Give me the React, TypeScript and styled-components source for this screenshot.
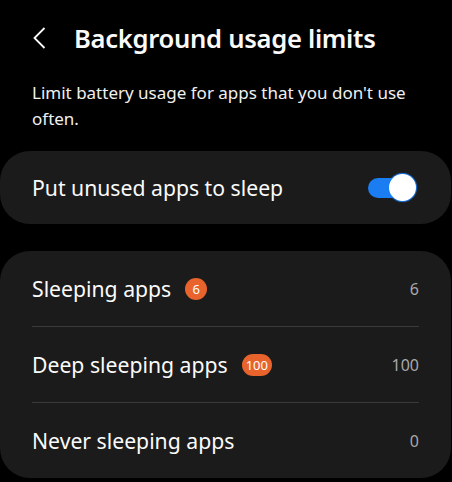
import styled, { createGlobalStyle } from "styled-components";

const GlobalStyle = createGlobalStyle`
  html, body {
    margin: 0;
    padding: 0;
    background: #000;
  }
  body {
    font-family: "Noto Sans", "Open Sans", sans-serif;
    color: #fafafa;
  }
`;

const Screen = styled.div`
  width: 452px;
  height: 482px;
  background: #000;
  overflow: hidden;
  display: flex;
  flex-direction: column;
`;

const Header = styled.div`
  height: 76px;
  display: flex;
  align-items: center;
  padding-left: 33px;
  gap: 23px;
`;

const BackButton = styled.div`
  width: 18px;
  height: 26px;
  display: flex;
  align-items: center;
`;

const Title = styled.h1`
  margin: 0;
  font-size: 25.6px;
  font-weight: 600;
  letter-spacing: -0.3px;
`;

const Description = styled.p`
  margin: 0;
  padding: 4px 32px 0;
  font-size: 17px;
  line-height: 26px;
  color: #f0f0f0;
`;

const Card = styled.div<{ $top: number }>`
  margin: ${(p) => p.$top}px 1px 0 0;
  background: #1b1b1b;
  border-radius: 30px;
  display: flex;
  flex-direction: column;
  padding: 0 32px;
`;

const SwitchRow = styled.div`
  height: 73px;
  display: flex;
  align-items: center;
  justify-content: space-between;
`;

const Row = styled.div<{ $last?: boolean }>`
  height: 75px;
  display: flex;
  align-items: center;
  justify-content: space-between;
  border-bottom: ${(p) => (p.$last ? "none" : "1px solid #3a3a3a")};
`;

const Label = styled.div`
  display: flex;
  align-items: center;
  gap: 14px;
  font-size: 21.2px;
`;

const Badge = styled.span`
  min-width: 22px;
  height: 22px;
  padding: 0 4px;
  box-sizing: border-box;
  border-radius: 11px;
  background: #e8642c;
  color: #fff;
  font-size: 13px;
  display: inline-flex;
  align-items: center;
  justify-content: center;
`;

const Value = styled.span`
  font-size: 16px;
  color: #a8a8a8;
`;

const Track = styled.div`
  position: relative;
  width: 39px;
  height: 20px;
  margin-right: 12px;
  border-radius: 10px;
  background: #1a7ef2;
`;

const Thumb = styled.div`
  position: absolute;
  right: -9px;
  top: -4px;
  width: 27px;
  height: 27px;
  border-radius: 50%;
  background: #fff;
  box-shadow: 0 0 1px 1px #1a7ef2;
`;

const rows = [
  { label: "Sleeping apps", badge: "6", value: "6" },
  { label: "Deep sleeping apps", badge: "100", value: "100" },
  { label: "Never sleeping apps", value: "0" },
];

export default function App() {
  return (
    <Screen>
      <GlobalStyle />
      <Header>
        <BackButton>
          <svg width="13" height="22" viewBox="0 0 13 22">
            <path d="M11.5 1 L1.5 11 L11.5 21" fill="none" stroke="#fafafa" strokeWidth="1.8" />
          </svg>
        </BackButton>
        <Title>Background usage limits</Title>
      </Header>
      <Description>Limit battery usage for apps that you don't use often.</Description>
      <Card $top={19}>
        <SwitchRow>
          <Label>Put unused apps to sleep</Label>
          <Track>
            <Thumb />
          </Track>
        </SwitchRow>
      </Card>
      <Card $top={27}>
        {rows.map((r, i) => (
          <Row key={r.label} $last={i === rows.length - 1}>
            <Label>
              {r.label}
              {r.badge ? <Badge>{r.badge}</Badge> : null}
            </Label>
            <Value>{r.value}</Value>
          </Row>
        ))}
      </Card>
    </Screen>
  );
}
